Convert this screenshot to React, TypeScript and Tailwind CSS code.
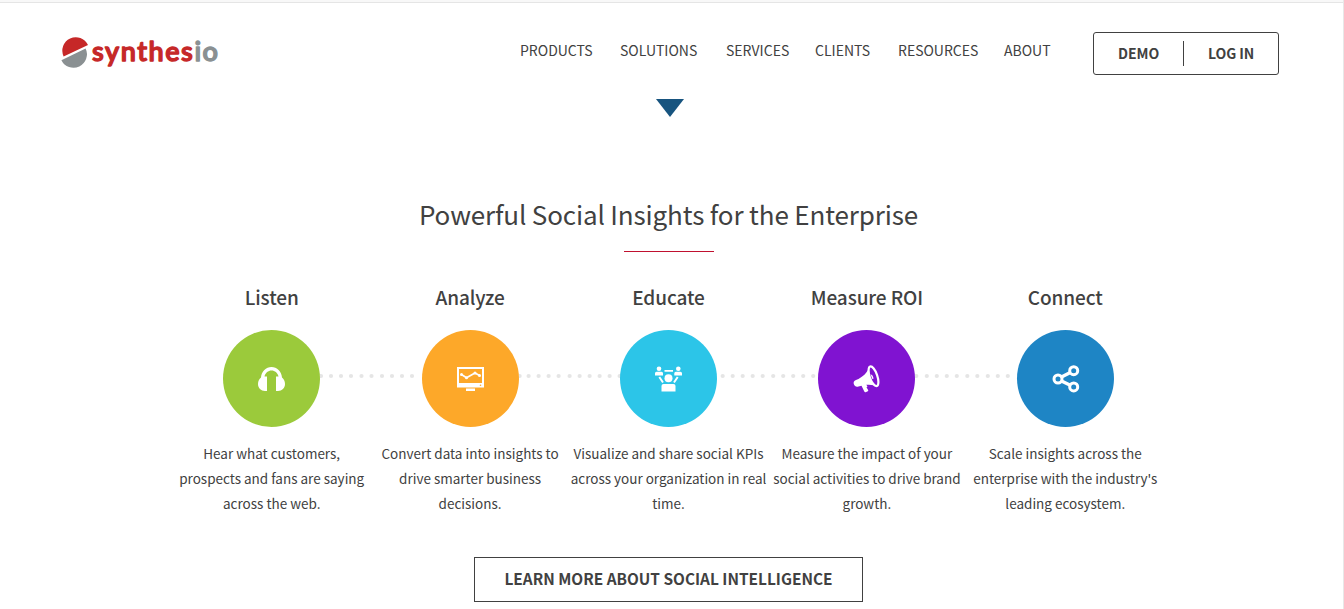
import type { ReactNode } from 'react';

const navItems = [
  { label: 'PRODUCTS', width: 73 },
  { label: 'SOLUTIONS', width: 79 },
  { label: 'SERVICES', width: 62 },
  { label: 'CLIENTS', width: 56 },
  { label: 'RESOURCES', width: 79 },
  { label: 'ABOUT', width: 47 },
];

type Feature = {
  title: string;
  color: string;
  lines: string[];
  dots: number[];
  icon: ReactNode;
};

function Logo() {
  return (
    <svg width="170" height="44" viewBox="0 0 170 44" className="overflow-visible" role="img" aria-label="synthesio">
      <path d="M2.6 20.4 A12.6 12.6 0 0 1 27 9 Z" fill="#c62828" />
      <path d="M0.4 24.200 L24.600 12.600 A12.400 12.400 0 0 1 0.400 24.200 Z" fill="#8a9092" />
      <text
        x="31"
        y="24.500"
        textLength="126"
        strokeWidth="1.300"
        strokeLinejoin="round"
        className="font-['Lato',sans-serif] text-[27px] font-semibold"
      >
        <tspan fill="#c62828" stroke="#c62828">synthes</tspan>
        <tspan fill="#8a9092" stroke="#8a9092">io</tspan>
      </text>
    </svg>
  );
}

const features: Feature[] = [
  {
    title: 'Listen',
    color: 'bg-[#9bca3b]',
    lines: ['Hear what customers,', 'prospects and fans are saying', 'across the web.'],
    dots: [321, 331, 341, 351, 361.5, 371.5, 382, 392, 402, 412],
    icon: (
      <svg width="27" height="24" viewBox="0 0 27 24" fill="#fff">
        <path d="M9 9.500 V24 H7 C3 24 0 21 0 17 C0 14 1.200 12 3 10.500 C3.500 4.500 8 0 13.500 0 S23.500 4.500 24 10.500 C25.800 12 27 14 27 17 C27 21 24 24 20 24 H18 V9.500 H20.500 C19.500 5.800 17 3.600 13.500 3.600 S7.500 5.800 6.500 9.500 Z" />
      </svg>
    ),
  },
  {
    title: 'Analyze',
    color: 'bg-[#fda829]',
    lines: ['Convert data into insights to', 'drive smarter business', 'decisions.'],
    dots: [519, 528, 538, 548, 558, 569, 579, 589, 599, 609, 619],
    icon: (
      <svg width="27" height="24" viewBox="0 0 27 24">
        <path fill="#fff" fillRule="evenodd" d="M0 0 H27 V20.500 H0 Z M2 2 V16 H25 V2 Z M9 21.500 H18 V24 H9 Z" />
        <path d="M4.500 7.500 L9.500 10.700 L18 6 L22.500 8.500" fill="none" stroke="#fff" strokeWidth="1.700" />
        <circle cx="4.500" cy="7.500" r="1.500" fill="#fff" />
        <circle cx="9.500" cy="10.700" r="1.500" fill="#fff" />
        <circle cx="18" cy="6" r="1.500" fill="#fff" />
        <circle cx="22.500" cy="8.500" r="1.500" fill="#fff" />
        <circle cx="23.500" cy="18.300" r="0.800" fill="#fda829" />
      </svg>
    ),
  },
  {
    title: 'Educate',
    color: 'bg-[#2cc5e8]',
    lines: ['Visualize and share social KPIs', 'across your organization in real', 'time.'],
    dots: [722.5, 732.5, 742.5, 752.5, 762.5, 773, 783, 793, 803, 813],
    icon: (
      <svg width="27" height="26" viewBox="0 0 27 26" fill="#fff" className="ml-px">
        <circle cx="4" cy="2.700" r="2.300" />
        <circle cx="23.300" cy="2.700" r="2.300" />
        <path d="M0 9.500 V7.200 Q0 5.700 1.500 5.700 H6.500 Q8 5.700 8 7.200 V9.500 Z M19.300 9.500 V7.200 Q19.300 5.700 20.800 5.700 H25.500 Q27 5.700 27 7.200 V9.500 Z M9.500 4 H18 V5.800 H9.500 Z" />
        <path d="M4.300 11 L8 16.500 M22.700 11 L19 16.500" stroke="#fff" strokeWidth="2" />
        <circle cx="13.500" cy="12.300" r="4" />
        <path d="M6.500 25.500 V20 Q6.500 18 8.500 18 H18.500 Q20.500 18 20.500 20 V25.500 Z" />
      </svg>
    ),
  },
  {
    title: 'Measure ROI',
    color: 'bg-[#8013d1]',
    lines: ['Measure the impact of your', 'social activities to drive brand', 'growth.'],
    dots: [916.5, 927, 937, 947, 957, 967.500, 977.500, 988, 998, 1008],
    icon: (
      <svg width="28" height="28" viewBox="0 0 28 28">
        <path fill="#fff" d="M17 1.500 C14.500 7 10 12.500 3 15 C0.800 15.800 0.200 17.500 0.900 19.300 C1.600 21.300 3.200 22.200 5.500 21.500 L8.500 20.800 L11.300 26.500 Q11.700 27.500 12.700 27.200 L14.800 26.300 Q15.600 25.800 15.100 25 L13.500 22.300 L14.500 21.500 L13.300 19.800 C18 19.200 21 20.300 24.500 21.500 Z" />
        <ellipse cx="20.500" cy="11.300" rx="3.800" ry="10.300" transform="rotate(-19 20.500 11.300)" fill="#8013d1" stroke="#fff" strokeWidth="2.200" />
        <path fill="#fff" d="M17.500 9 Q20.300 10 20.600 13.500 L19.300 14 Z" />
      </svg>
    ),
  },
  {
    title: 'Connect',
    color: 'bg-[#1e85c5]',
    lines: ['Scale insights across the', "enterprise with the industry's", 'leading ecosystem.'],
    dots: [],
    icon: (
      <svg width="28" height="28" viewBox="0 0 28 28" fill="none" stroke="#fff" strokeWidth="3" className="ml-px">
        <circle cx="6" cy="14" r="4" />
        <circle cx="21.700" cy="5.700" r="4" />
        <circle cx="21.700" cy="21.900" r="4" />
        <path d="M9.500 12 L18.300 7.500 M9.500 16 L18.300 20.300" strokeWidth="3.400" />
      </svg>
    ),
  },
];

export default function App() {
  return (
    <div className="h-[609px] w-[1344px] overflow-hidden border-r border-[#e8e8e8] bg-white font-['Noto_Sans_CJK_SC',sans-serif] text-[#414141]">
      <div className="h-[3px] border-b border-[#e5e5e5] bg-[#f8f8f8]" />

      {/* Header */}
      <header className="flex h-[96px] items-start pl-[61px]">
        <a href="#" className="mt-[33px] block w-[459px]">
          <Logo />
        </a>
        <nav className="mt-[35px] flex gap-[27px] text-[14px] leading-6">
          {navItems.map((item) => (
            <a key={item.label} href="#" className="whitespace-nowrap" style={{ width: item.width }}>
              {item.label}
            </a>
          ))}
        </nav>
        <div className="mt-[29px] ml-[42px] flex h-[43px] w-[186px] items-center rounded-[3px] border border-[#414141] pl-6 text-[14px] leading-5 font-bold">
          <a href="#" className="w-[65px] pb-0.5">DEMO</a>
          <span className="h-[25px] w-px bg-[#414141]" />
          <a href="#" className="pb-0.5 pl-6 tracking-[-0.1px] whitespace-nowrap">LOG IN</a>
        </div>
      </header>

      <main className="flex w-[1337px] flex-col items-center">
        {/* Marker under the active section */}
        <svg width="28" height="18" viewBox="0 0 28 18" className="ml-[3px]">
          <path d="M0 0 H28 L14 18 Z" fill="#17547f" />
        </svg>

        <h1 className="mt-[77px] text-[26px] leading-10 tracking-[-0.14px] whitespace-nowrap">
          Powerful Social Insights for the Enterprise
        </h1>
        <div className="mt-[17px] h-px w-[90px] bg-[#c0112f]" />

        <section className="mt-[30px] grid w-[992px] grid-cols-5">
          {features.map((feature, i) => (
            <article key={feature.title} className="flex flex-col items-center text-center">
              <h2 className="text-[19px] leading-[30px] font-medium tracking-[-0.1px]">{feature.title}</h2>
              <div className="relative mt-[18px]">
                <div className={`flex size-[97px] items-center justify-center rounded-full ${feature.color}`}>
                  {feature.icon}
                </div>
                <svg width="103" height="6" className="absolute top-[43px] left-[97px]" fill="#e5e5e5">
                  {feature.dots.map((x) => (
                    <circle key={x} cx={x - 320 - i * 198.4} cy="3" r="2.100" />
                  ))}
                </svg>
              </div>
              <p className="mt-[14px] text-[13.5px] leading-[25px] whitespace-nowrap">
                {feature.lines.map((line) => (
                  <span key={line} className="block">{line}</span>
                ))}
              </p>
            </article>
          ))}
        </section>

        <a
          href="#"
          className="mt-[41px] flex h-[45px] w-[389px] items-center justify-center border border-[#414141] pb-px text-[15.4px] font-bold whitespace-nowrap"
        >
          LEARN MORE ABOUT SOCIAL INTELLIGENCE
        </a>
      </main>
    </div>
  );
}
